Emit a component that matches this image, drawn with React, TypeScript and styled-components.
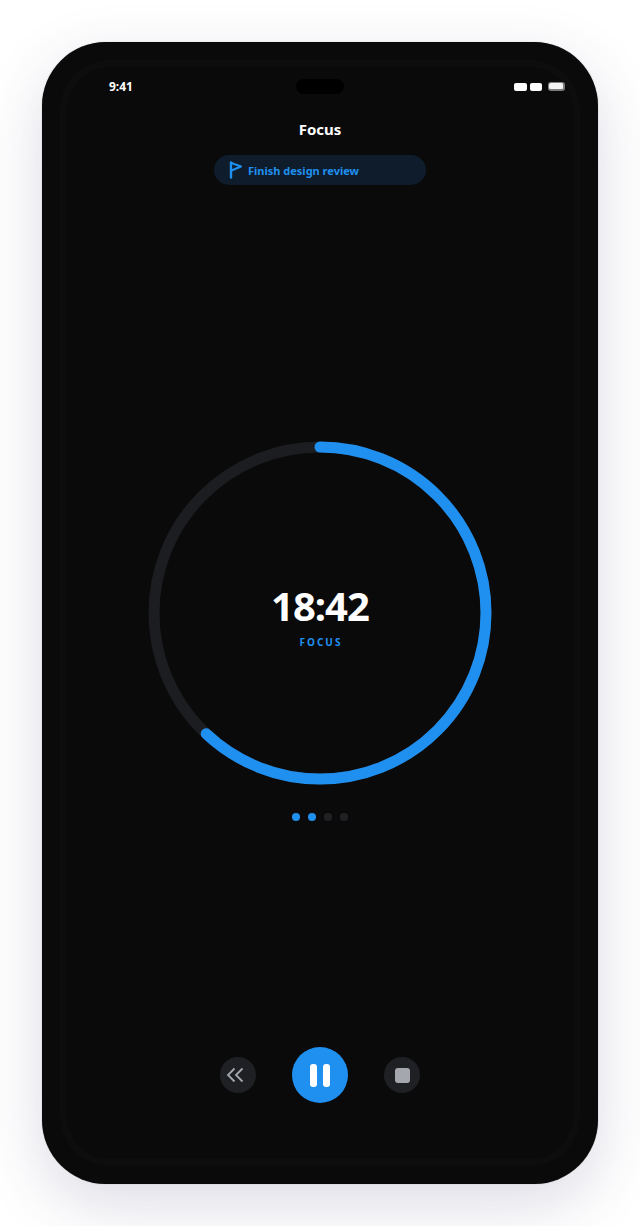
import styled, { createGlobalStyle } from "styled-components";

const GlobalStyle = createGlobalStyle`
  html, body {
    margin: 0;
    padding: 0;
    background: #ffffff;
  }
  body {
    font-family: "Noto Sans", "Open Sans", sans-serif;
  }
`;

const Page = styled.div`
  width: 640px;
  height: 1226px;
  box-sizing: border-box;
  padding: 42px;
  overflow: hidden;
`;

const Phone = styled.div`
  width: 556px;
  height: 1142px;
  box-sizing: border-box;
  padding: 25px;
  background: #0a0a0a;
  border-radius: 64px;
  box-shadow: 0 20px 60px rgba(60, 60, 110, 0.18), 0 0 1px rgba(0, 0, 0, 0.4);
`;

const Screen = styled.div`
  position: relative;
  height: 100%;
  box-sizing: border-box;
  display: flex;
  flex-direction: column;
  align-items: center;
  border-radius: 43px;
  background: #0a0a0a;
  box-shadow: 0 0 0 7px #0d0d0d;
`;

const StatusBar = styled.div`
  align-self: stretch;
  height: 26px;
  margin-top: 6px;
  padding: 0 8px 0 42px;
  display: flex;
  align-items: center;
  justify-content: space-between;
`;

const Clock = styled.span`
  color: #ffffff;
  font-size: 12px;
  font-weight: 700;
`;

const Island = styled.div`
  position: absolute;
  top: 12px;
  left: 229px;
  width: 48px;
  height: 15px;
  border-radius: 8px;
  background: #000000;
`;

const StatusIcons = styled.div`
  display: flex;
  align-items: flex-end;
  gap: 3px;
`;

const Signal = styled.div<{ $width: number }>`
  width: ${({ $width }) => $width}px;
  height: 8px;
  border-radius: 2px;
  background: #ffffff;
`;

const Battery = styled.div`
  width: 14px;
  height: 6px;
  margin-left: 3px;
  border: 1.5px solid #7c7c7c;
  border-right-width: 2.5px;
  border-bottom-width: 2.5px;
  border-radius: 3px;
  background: #f2f2f2;
`;

const Title = styled.h1`
  margin: 20px 0 0;
  color: #ffffff;
  font-size: 15px;
  line-height: 20px;
  font-weight: 700;
`;

const TaskPill = styled.div`
  width: 212px;
  height: 30px;
  margin-top: 16px;
  box-sizing: border-box;
  padding-left: 15px;
  display: flex;
  align-items: center;
  gap: 5px;
  border-radius: 15px;
  background: #0e1c2b;
  color: #2090f0;
  font-size: 11px;
  font-weight: 700;
`;

const TimerWrap = styled.div`
  position: relative;
  width: 344px;
  height: 344px;
  margin-top: 256px;
`;

const TimerCenter = styled.div`
  position: absolute;
  inset: 0;
  display: flex;
  flex-direction: column;
  align-items: center;
  justify-content: center;
`;

const Time = styled.div`
  margin-top: 4px;
  color: #ffffff;
  font-size: 40px;
  line-height: 48px;
  font-weight: 700;
  letter-spacing: -1px;
`;

const Phase = styled.div`
  margin: 5px 0 0 2px;
  color: #2090f0;
  font-size: 10px;
  line-height: 14px;
  font-weight: 700;
  letter-spacing: 2px;
`;

const Dots = styled.div`
  display: flex;
  gap: 8px;
  margin-top: 28px;
`;

const Dot = styled.span<{ $active?: boolean }>`
  width: 8px;
  height: 8px;
  border-radius: 50%;
  background: ${({ $active }) => ($active ? "#2090f0" : "#202124")};
`;

const Controls = styled.div`
  display: flex;
  align-items: center;
  gap: 36px;
  margin-top: 226px;
`;

const RoundButton = styled.button<{ $primary?: boolean }>`
  width: ${({ $primary }) => ($primary ? 56 : 36)}px;
  height: ${({ $primary }) => ($primary ? 56 : 36)}px;
  padding: 0;
  border: 0;
  border-radius: 50%;
  display: flex;
  align-items: center;
  justify-content: center;
  gap: 6px;
  background: ${({ $primary }) => ($primary ? "#2090f0" : "#1f2023")};
`;

const PauseBar = styled.span`
  width: 7px;
  height: 23px;
  border-radius: 3px;
  background: #ffffff;
`;

const StopSquare = styled.span`
  width: 15px;
  height: 15px;
  border-radius: 3px;
  background: #a4a7ae;
`;

const RADIUS = 166;
const CIRCUMFERENCE = 2 * Math.PI * RADIUS;
const PROGRESS = 0.62;

const App = () => {
  return (
    <Page>
      <GlobalStyle />
      <Phone>
        <Screen>
          <Island />
          <StatusBar>
            <Clock>9:41</Clock>
            <StatusIcons>
              <Signal $width={13} />
              <Signal $width={12} />
              <Battery />
            </StatusIcons>
          </StatusBar>
          <Title>Focus</Title>
          <TaskPill>
            <svg width="14" height="18" viewBox="0 0 14 18" fill="none">
              <path d="M2 1.5V16.5" stroke="#2090f0" strokeWidth="2.4" strokeLinecap="round" />
              <path d="M2.5 2L12 5.5L2.5 9.5" stroke="#2090f0" strokeWidth="2" strokeLinejoin="round" />
            </svg>
            Finish design review
          </TaskPill>
          <TimerWrap>
            <svg width="344" height="344" viewBox="0 0 344 344" fill="none">
              <circle cx="172" cy="172" r={RADIUS} stroke="#1c1d20" strokeWidth="11" />
              <circle
                cx="172"
                cy="172"
                r={RADIUS}
                stroke="#2090f0"
                strokeWidth="11"
                strokeLinecap="round"
                strokeDasharray={`${CIRCUMFERENCE * PROGRESS} ${CIRCUMFERENCE}`}
                transform="rotate(-90 172 172)"
              />
            </svg>
            <TimerCenter>
              <Time>18:42</Time>
              <Phase>FOCUS</Phase>
            </TimerCenter>
          </TimerWrap>
          <Dots>
            <Dot $active />
            <Dot $active />
            <Dot />
            <Dot />
          </Dots>
          <Controls>
            <RoundButton aria-label="Back">
              <svg width="24" height="18" viewBox="0 0 24 18" fill="none">
                <path
                  d="M8.5 2.5L2 9L8.5 15.5M16.5 2.5L10 9L16.5 15.5"
                  stroke="#a4a7ae"
                  strokeWidth="1.8"
                />
              </svg>
            </RoundButton>
            <RoundButton $primary aria-label="Pause">
              <PauseBar />
              <PauseBar />
            </RoundButton>
            <RoundButton aria-label="Stop">
              <StopSquare />
            </RoundButton>
          </Controls>
        </Screen>
      </Phone>
    </Page>
  );
};

export default App;
